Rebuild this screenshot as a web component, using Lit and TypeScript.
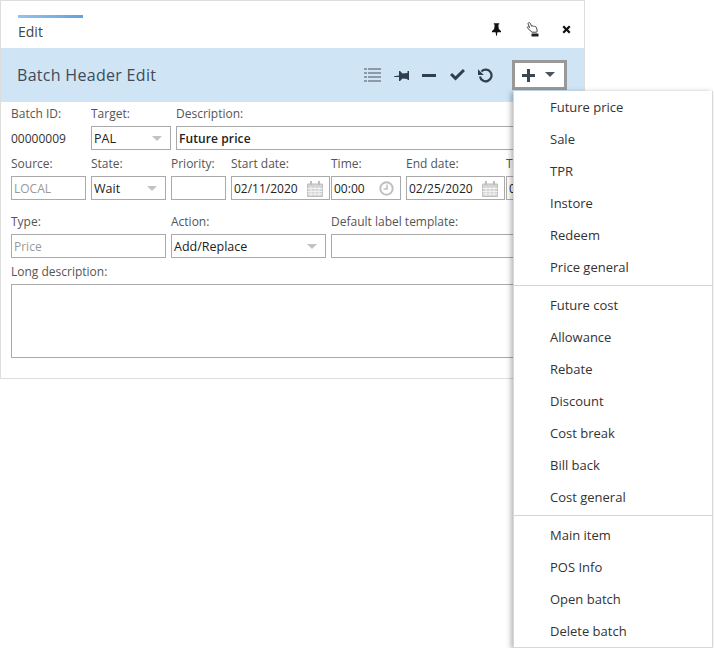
/**
 * Batch Header Edit window with its add menu open.
 */

import { LitElement, html, css, svg } from 'lit';
import { customElement } from 'lit/decorators.js';

const MENU_GROUPS = [
  ['Future price', 'Sale', 'TPR', 'Instore', 'Redeem', 'Price general'],
  ['Future cost', 'Allowance', 'Rebate', 'Discount', 'Cost break', 'Bill back', 'Cost general'],
  ['Main item', 'POS Info', 'Open batch', 'Delete batch'],
];

const icon = (w: number, h: number, body: unknown, dw = w, dh = h) => html`
  <svg width=${dw} height=${dh} viewBox="0 0 ${w} ${h}">${body}</svg>
`;

const pinIcon = icon(10, 14, svg`<path fill="#111" d="M2 0h6v1.500H7l.6 5L10 8.600V10H6L5.400 14h-.8L4 10H0V8.600l2.400-2.100L3 1.500H2z"/>`, 9, 13);
const handIcon = icon(13, 15, svg`
  <path fill="#fff" stroke="#444" d="M2.500.8c.8-.5 1.500 0 1.900.8l1.300 2.700.5-.4c.6-.2 1 0 1.300.4.500-.4 1.100-.2 1.400.3.600-.2 1.100 0 1.300.6l.9 2.600c.2.900 0 1.700-.5 2.400H6L1.700 6.300c-.5-.6-.4-1.200.1-1.500.5-.2 1-.1 1.400.3l.4.5L2.200 2.100c-.3-.5-.2-1 .3-1.300z"/>
  <rect x="5.500" y="11.500" width="7" height="3" rx=".5" fill="#222"/>
`);
const closeIcon = icon(10, 10, svg`<path fill="#111" d="M2.300.5 5 3.200 7.700.5 9.500 2.300 6.800 5l2.700 2.700-1.800 1.800L5 6.800 2.300 9.500.5 7.700 3.200 5 .5 2.300z"/>`, 9, 9);
const listIcon = icon(17, 14, svg`<path fill="#8b9aa6" d="M0 0h3v2H0zm4 0h13v2H4zM0 4h3v2H0zm4 0h13v2H4zM0 8h3v2H0zm4 0h13v2H4zM0 12h3v2H0zm4 0h13v2H4z"/>`);
const sidePinIcon = icon(15, 11, svg`<path fill="#2f3f4f" d="M15 1v9h-1.500v-1l-5-.5L6 11H5V7H0v-.8L5 5.500V1h1l2.500 2.500 5-.5V1z"/>`);
const minusIcon = html`<div class="minus"></div>`;
const checkIcon = icon(15, 12, svg`<path fill="#2f3f4f" d="M5.500 11.500 0 6l2.100-2.100 3.400 3.400L12.900 0 15 2.100z"/>`);
const undoIcon = icon(15, 15, svg`
  <path fill="none" stroke="#2f3f4f" stroke-width="2.200" d="M3.500 3.500A5.800 5.800 0 1 1 2 8.500"/>
  <path fill="#2f3f4f" d="M0 1.200 0 7h5.800z"/>
`);
const plusIcon = icon(13, 13, svg`<path fill="#3b4652" d="M5 0h3v5h5v3H8v5H5V8H0V5h5z"/>`);
const caretDark = html`<span class="caret dark"></span>`;
const caretLight = html`<span class="caret"></span>`;
const calendarIcon = icon(16, 16, svg`
  <path fill="#d4d4d4" stroke="#bdbdbd" d="M.5 3h15v12.500H.5z"/>
  <path fill="#bdbdbd" d="M3 0h2v4H3zm8 0h2v4h-2z"/>
  <path stroke="#f2f2f2" d="M.5 7.500h15M.5 10.500h15M.5 13h15M4 6v9M8 6v9M12 6v9"/>
`);
const clockIcon = icon(15, 15, svg`
  <circle cx="7.500" cy="7.500" r="6.200" fill="none" stroke="#bfbfbf" stroke-width="2"/>
  <path fill="none" stroke="#bfbfbf" stroke-width="1.500" d="M8 3.500V8H4.500"/>
`);

@customElement('app-root')
export class AppRoot extends LitElement {
  static styles = css`
    :host {
      display: block;
      height: 648px;
      overflow: hidden;
      font-family: 'Open Sans', sans-serif;
      font-size: 12px;
      color: #555;
    }
    .window {
      box-sizing: border-box;
      width: 585px;
      height: 379px;
      border: 1px solid #ddd;
      background: #fff;
    }
    .tabs {
      display: flex;
      justify-content: space-between;
      height: 47px;
      box-sizing: border-box;
      padding-left: 17px;
    }
    .tab {
      width: 65px;
      margin-top: 14px;
      height: 33px;
      border-top: 3px solid #6aa9e0;
      border-image: linear-gradient(90deg, #93c4ec, #5fa3dd) 1;
      font-size: 14px;
      line-height: 28px;
      color: #444;
    }
    .win-tools {
      display: flex;
      align-items: center;
      height: 18px;
      margin-top: 19px;
      margin-right: 13px;
    }
    .win-tools > * { display: block; }
    .win-tools svg { display: block; }
    .win-tools .pin { margin-right: 25px; }
    .win-tools .hand { margin-right: 23px; }
    .head {
      display: flex;
      align-items: center;
      height: 54px;
      padding-left: 16px;
      background: #cfe5f6;
      font-size: 16px;
      font-weight: 500;
      letter-spacing: 0.3px;
      color: #3f4a56;
    }
    .title { flex: 1; }
    .head-tools {
      display: flex;
      align-items: center;
      margin-right: 17px;
    }
    .head-tools svg, .head-tools .minus { display: block; }
    .minus {
      width: 14px;
      height: 3px;
      background: #2f3f4f;
    }
    .head-tools .list { margin-right: 13px; }
    .head-tools .side { margin-right: 13px; }
    .head-tools .dash { margin-right: 14px; }
    .head-tools .ok { margin-right: 13px; }
    .head-tools .undo { margin-right: 19px; }
    .add {
      position: relative;
      box-sizing: border-box;
      display: flex;
      align-items: center;
      width: 55px;
      height: 30px;
      padding-left: 7px;
      gap: 10px;
      border: 3px solid #999;
      background: #fff;
    }
    .caret {
      flex: none;
      width: 0;
      height: 0;
      margin-top: -1px;
      border: 5px solid transparent;
      border-top: 5px solid #c3c3c3;
      border-bottom: 0;
    }
    .caret.dark { border-top-color: #4a5560; }
    .menu {
      position: absolute;
      left: -2px;
      top: 28px;
      box-sizing: border-box;
      width: 200px;
      background: #fff;
      border: 1px solid #d8d8d8;
      border-top: 0;
      box-shadow: -2px 1px 5px rgba(0, 0, 0, 0.3);
      font-size: 13px;
      font-weight: 400;
      letter-spacing: 0;
      color: #333;
      z-index: 2;
    }
    .item {
      height: 32px;
      line-height: 32px;
      padding-left: 36px;
    }
    .sep {
      height: 1px;
      margin: 2px 0 3px;
      background: #d5d5d5;
    }
    .form {
      display: flex;
      flex-direction: column;
      padding: 3px 0 0 10px;
    }
    .row { display: flex; gap: 5px; }
    .cell { display: flex; flex-direction: column; flex: none; }
    .label {
      height: 21px;
      line-height: 17px;
      color: #555;
      white-space: nowrap;
    }
    .field {
      box-sizing: border-box;
      display: flex;
      align-items: center;
      justify-content: space-between;
      height: 24px;
      padding: 1px 2px 0;
      border: 1px solid #aaa;
      font-size: 12.500px;
      line-height: 22px;
      color: #222;
      overflow: hidden;
      white-space: nowrap;
    }
    .field.strong { font-weight: 600; font-size: 12px; letter-spacing: 0.1px; }
    .field.muted { color: #999; font-size: 12px; }
    .field.date { font-size: 12px; }
    .field .caret { margin-right: 6px; }
    .field svg { flex: none; display: block; margin-right: 4px; }
    .plain {
      height: 24px;
      line-height: 25px;
      color: #333;
    }
    .row.r2 { margin-top: 5px; }
    .row.r3 { margin-top: 13px; }
    .long { margin-top: 5px; }
    .long .field { height: 74px; width: 563px; }
    .tuck { margin-left: -4px; }
  `;

  private renderField(label: string, width: number, value: unknown, cls = '', trailing: unknown = '', cellCls = '') {
    return html`
      <div class="cell ${cellCls}" style="width:${width}px">
        <div class="label">${label}</div>
        <div class="field ${cls}"><span>${value}</span>${trailing}</div>
      </div>
    `;
  }

  render() {
    return html`
      <div class="window">
        <div class="tabs">
          <div class="tab"><span>Edit</span></div>
          <div class="win-tools">
            <span class="pin">${pinIcon}</span>
            <span class="hand">${handIcon}</span>
            <span>${closeIcon}</span>
          </div>
        </div>
        <div class="head">
          <div class="title">Batch Header Edit</div>
          <div class="head-tools">
            <span class="list">${listIcon}</span>
            <span class="side">${sidePinIcon}</span>
            <span class="dash">${minusIcon}</span>
            <span class="ok">${checkIcon}</span>
            <span class="undo">${undoIcon}</span>
            <div class="add">
              ${plusIcon}${caretDark}
              <div class="menu">
                ${MENU_GROUPS.map((group, i) => html`
                  ${i > 0 ? html`<div class="sep"></div>` : ''}
                  ${group.map(item => html`<div class="item">${item}</div>`)}
                `)}
              </div>
            </div>
          </div>
        </div>
        <div class="form">
          <div class="row">
            <div class="cell" style="width:75px">
              <div class="label">Batch ID:</div>
              <div class="plain">00000009</div>
            </div>
            ${this.renderField('Target:', 80, 'PAL', '', caretLight)}
            ${this.renderField('Description:', 398, 'Future price', 'strong')}
          </div>
          <div class="row r2">
            ${this.renderField('Source:', 75, 'LOCAL', 'muted')}
            ${this.renderField('State:', 75, 'Wait', '', caretLight)}
            ${this.renderField('Priority:', 55, '')}
            ${this.renderField('Start date:', 99, '02/11/2020', 'date', calendarIcon)}
            ${this.renderField('Time:', 70, '00:00', 'date', clockIcon, 'tuck')}
            ${this.renderField('End date:', 99, '02/25/2020', 'date', calendarIcon)}
            ${this.renderField('Time:', 70, '00:00', 'date', clockIcon, 'tuck')}
          </div>
          <div class="row r3">
            ${this.renderField('Type:', 155, 'Price', 'muted')}
            ${this.renderField('Action:', 155, 'Add/Replace', '', caretLight)}
            ${this.renderField('Default label template:', 243, '')}
          </div>
          <div class="long">
            <div class="label">Long description:</div>
            <div class="field"></div>
          </div>
        </div>
      </div>
    `;
  }
}
